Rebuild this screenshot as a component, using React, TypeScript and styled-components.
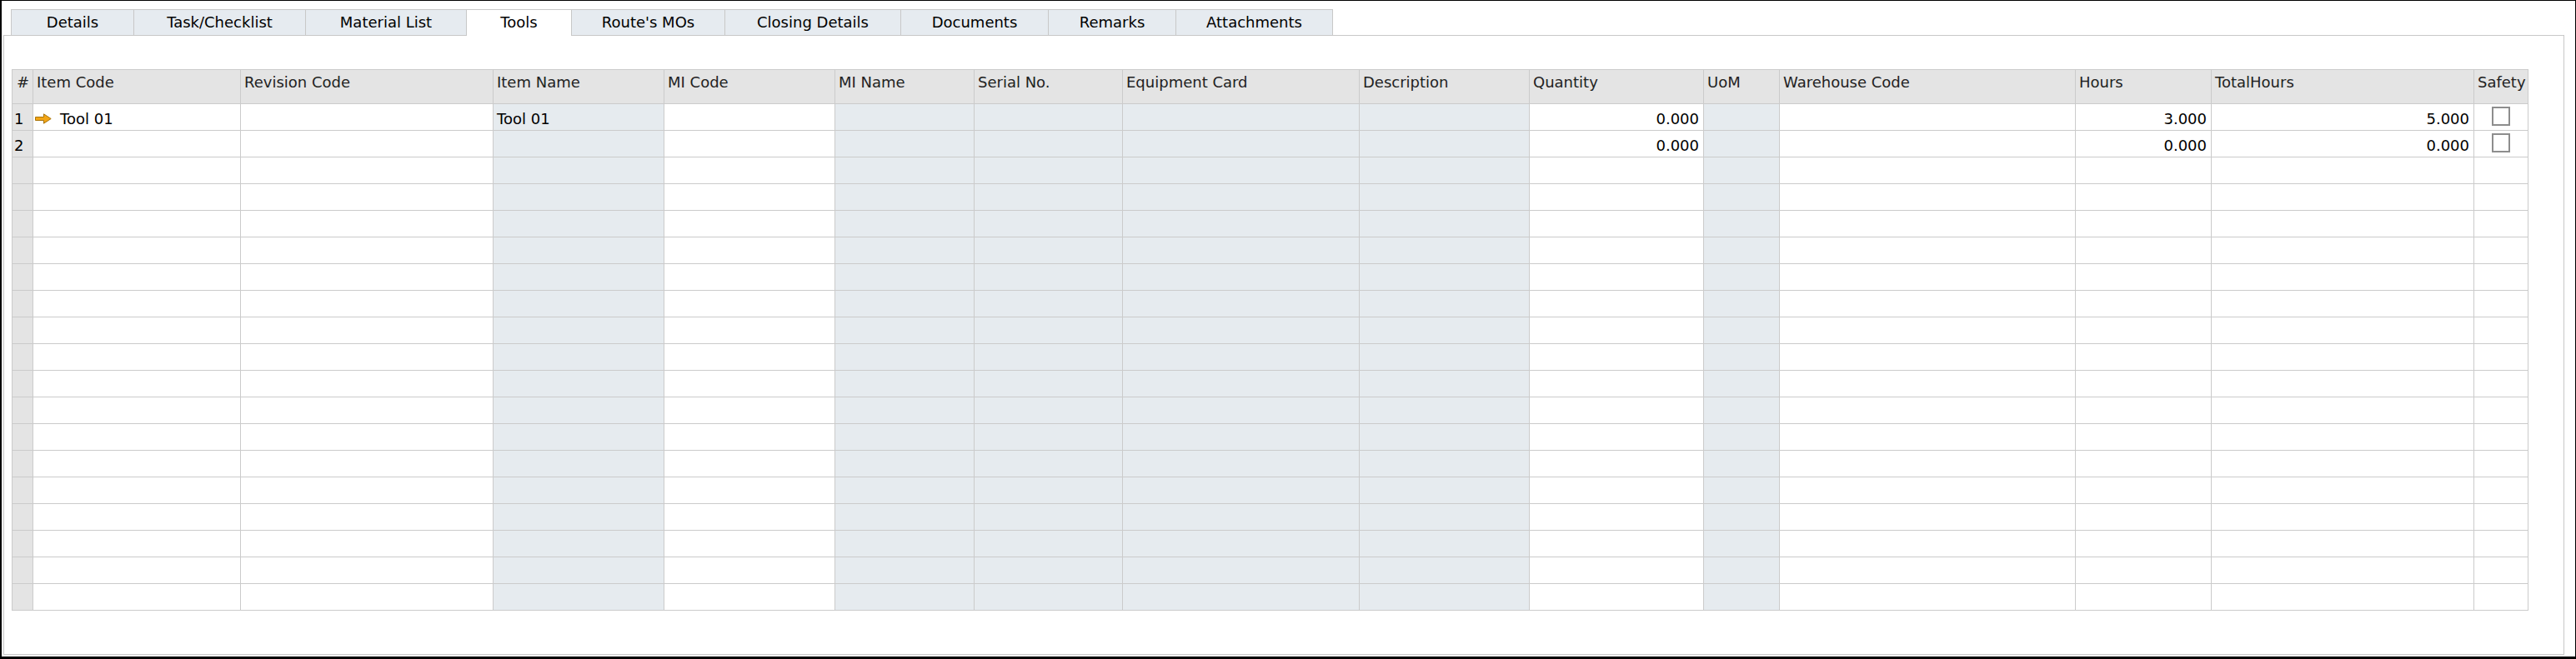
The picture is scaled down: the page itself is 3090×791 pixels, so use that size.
import React from 'react'
import styled, { createGlobalStyle, css } from 'styled-components'

const GlobalStyle = createGlobalStyle`
  html, body {
    margin: 0;
    padding: 0;
    background: #ffffff;
  }
  body {
    font-family: 'DejaVu Sans', 'Liberation Sans', sans-serif;
    font-size: 18px;
    color: #111;
  }
`

type Align = 'left' | 'right' | 'center'
type Kind = 'plain' | 'readonly' | 'index'

interface Column {
  key: string
  title: string
  width: number
  kind: Kind
  align: Align
}

const columns: Column[] = [
  { key: 'num', title: '#', width: 25, kind: 'index', align: 'left' },
  { key: 'itemCode', title: 'Item Code', width: 249, kind: 'plain', align: 'left' },
  { key: 'revision', title: 'Revision Code', width: 303, kind: 'plain', align: 'left' },
  { key: 'itemName', title: 'Item Name', width: 205, kind: 'readonly', align: 'left' },
  { key: 'miCode', title: 'MI Code', width: 205, kind: 'plain', align: 'left' },
  { key: 'miName', title: 'MI Name', width: 167, kind: 'readonly', align: 'left' },
  { key: 'serial', title: 'Serial No.', width: 178, kind: 'readonly', align: 'left' },
  { key: 'equipment', title: 'Equipment Card', width: 284, kind: 'readonly', align: 'left' },
  { key: 'description', title: 'Description', width: 204, kind: 'readonly', align: 'left' },
  { key: 'quantity', title: 'Quantity', width: 209, kind: 'plain', align: 'right' },
  { key: 'uom', title: 'UoM', width: 91, kind: 'readonly', align: 'left' },
  { key: 'warehouse', title: 'Warehouse Code', width: 355, kind: 'plain', align: 'left' },
  { key: 'hours', title: 'Hours', width: 163, kind: 'plain', align: 'right' },
  { key: 'totalHours', title: 'TotalHours', width: 315, kind: 'plain', align: 'right' },
  { key: 'safety', title: 'Safety', width: 65, kind: 'plain', align: 'center' },
]

const tabs = [
  { label: 'Details', width: 147 },
  { label: 'Task/Checklist', width: 206 },
  { label: 'Material List', width: 193 },
  { label: 'Tools', width: 126, active: true },
  { label: "Route's MOs", width: 184 },
  { label: 'Closing Details', width: 211 },
  { label: 'Documents', width: 177 },
  { label: 'Remarks', width: 153 },
  { label: 'Attachments', width: 189 },
]

type Row = Record<string, string | boolean | undefined>

const rows: Row[] = [
  { itemCode: 'Tool 01', itemName: 'Tool 01', quantity: '0.000', hours: '3.000', totalHours: '5.000', safety: true, current: true },
  { quantity: '0.000', hours: '0.000', totalHours: '0.000', safety: true },
  ...Array.from({ length: 17 }, () => ({})),
]

const RowArrow = () => (
  <svg width="20" height="13" viewBox="0 0 20 13">
    <path
      d="M0.5 4.5 H10.5 V0.8 L19.2 6.5 L10.5 12.2 V8.5 H0.5 Z"
      fill="#f2a516"
      stroke="#a8740b"
      strokeWidth="1"
      strokeLinejoin="miter"
    />
  </svg>
)

const App = () => {
  const template = columns.map((c) => `${c.width}px`).join(' ')

  return (
    <>
      <GlobalStyle />
      <Window>
        <TabRow>
          {tabs.map((t) => (
            <Tab key={t.label} $width={t.width} $active={!!t.active}>
              {t.label}
            </Tab>
          ))}
        </TabRow>
        <Panel>
          <Grid $template={template} $rows={rows.length}>
            {columns.map((c) => (
              <HeaderCell key={c.key} $align={c.key === 'num' ? 'center' : 'left'}>
                {c.title}
              </HeaderCell>
            ))}
            {rows.map((row, i) =>
              columns.map((c) => {
                if (c.key === 'num') {
                  return (
                    <Cell key={c.key} $kind="index" $align="left">
                      {i < 2 ? i + 1 : ''}
                    </Cell>
                  )
                }
                if (c.key === 'safety') {
                  return (
                    <Cell key={c.key} $kind={c.kind} $align="center">
                      {row.safety && <Checkbox />}
                    </Cell>
                  )
                }
                if (c.key === 'itemCode' && row.current) {
                  return (
                    <Cell key={c.key} $kind={c.kind} $align="left">
                      <Current>
                        <RowArrow />
                        <span>{row.itemCode}</span>
                      </Current>
                    </Cell>
                  )
                }
                return (
                  <Cell key={c.key} $kind={c.kind} $align={c.align}>
                    {row[c.key] as string}
                  </Cell>
                )
              })
            )}
          </Grid>
        </Panel>
      </Window>
    </>
  )
}

const Window = styled.div`
  box-sizing: border-box;
  width: 3090px;
  height: 791px;
  border-style: solid;
  border-color: #000;
  border-width: 1px 1px 3px 2px;
  padding: 10px 13px 2px 2px;
  display: flex;
  flex-direction: column;
  background: #fff;
`

const TabRow = styled.div`
  display: flex;
  height: 31px;
  padding-left: 9px;
  flex-shrink: 0;
`

const Tab = styled.div<{ $width: number; $active: boolean }>`
  box-sizing: border-box;
  width: ${({ $width }) => $width}px;
  height: 31px;
  border: 1px solid #c8c8c8;
  border-bottom: none;
  border-right: none;
  background: #e6ebf0;
  color: #000;
  font-size: 18px;
  line-height: 22px;
  padding-top: 4px;
  text-align: center;
  white-space: nowrap;

  &:last-child {
    border-right: 1px solid #c8c8c8;
  }

  ${({ $active }) =>
    $active &&
    css`
      background: #fff;
      height: 32px;
      margin-bottom: -1px;
      position: relative;
      z-index: 1;
      & + div {
        border-left-color: #c8c8c8;
      }
    `}
`

const Panel = styled.div`
  flex: 1;
  box-sizing: border-box;
  border: 1px solid #c8c8c8;
  padding: 40px 0 0 9px;
`

const Grid = styled.div<{ $template: string; $rows: number }>`
  display: grid;
  grid-template-columns: ${({ $template }) => $template};
  grid-template-rows: 41px repeat(${({ $rows }) => $rows}, 32px);
  width: max-content;
  border-left: 1px solid #cbcbcb;
  border-top: 1px solid #cbcbcb;
`

const HeaderCell = styled.div<{ $align: Align }>`
  box-sizing: border-box;
  background: #e4e4e4;
  border-right: 1px solid #cbcbcb;
  border-bottom: 1px solid #cbcbcb;
  padding: 4px 3px 0 4px;
  line-height: 22px;
  color: #222;
  white-space: nowrap;
  overflow: hidden;
  text-align: ${({ $align }) => $align};
`

const cellBg: Record<Kind, string> = {
  plain: '#ffffff',
  readonly: '#e6ebef',
  index: '#e4e4e4',
}

const Cell = styled.div<{ $kind: Kind; $align: Align }>`
  box-sizing: border-box;
  background: ${({ $kind }) => cellBg[$kind]};
  border-right: 1px solid #cbcbcb;
  border-bottom: 1px solid #cbcbcb;
  padding: ${({ $kind }) => ($kind === 'index' ? '7px 0 0 2px' : '7px 5px 0 4px')};
  line-height: 22px;
  color: #000;
  white-space: nowrap;
  overflow: hidden;
  text-align: ${({ $align }) => $align};
`

const Current = styled.div`
  display: flex;
  align-items: center;
  gap: 10px;
  margin-left: -2px;

  svg {
    flex-shrink: 0;
    margin-top: -2px;
  }
`

const Checkbox = styled.span`
  display: inline-block;
  box-sizing: border-box;
  width: 22px;
  height: 23px;
  margin-top: -4px;
  border: 2px solid #8d8d8d;
  background: #fff;
  vertical-align: top;
`

export default App
